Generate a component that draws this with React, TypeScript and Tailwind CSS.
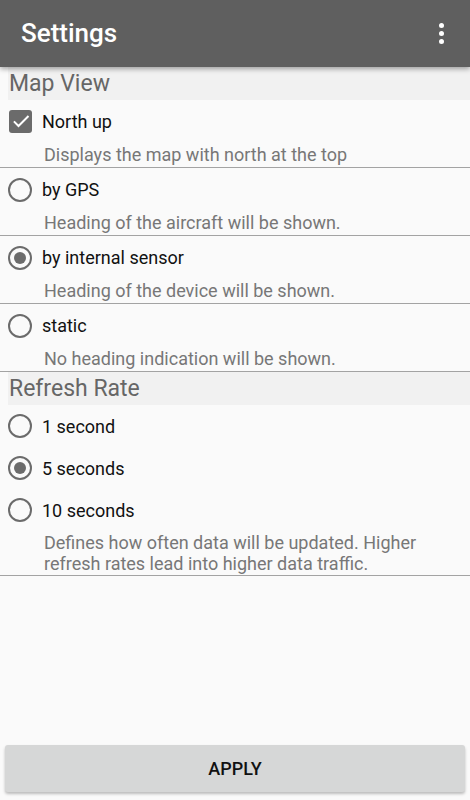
import { useState } from 'react'

type Option = { id: string; label: string; hint?: string }

const headingOptions: Option[] = [
  { id: 'gps', label: 'by GPS', hint: 'Heading of the aircraft will be shown.' },
  { id: 'sensor', label: 'by internal sensor', hint: 'Heading of the device will be shown.' },
  { id: 'static', label: 'static', hint: 'No heading indication will be shown.' },
]

const rates = [
  { id: '1', label: '1 second' },
  { id: '5', label: '5 seconds' },
  { id: '10', label: '10 seconds' },
]

function Radio({ checked }: { checked: boolean }) {
  return (
    <span className="flex h-[24px] w-[24px] shrink-0 items-center justify-center rounded-full border-[2.5px] border-[#6b6b6b]">
      {checked && <span className="h-[12px] w-[12px] rounded-full bg-[#6b6b6b]" />}
    </span>
  )
}

function SectionTitle({ children }: { children: React.ReactNode }) {
  return (
    <div className="ml-[8px] flex h-[33px] items-center bg-[#f1f1f1] pl-[1px] text-[23px] leading-none text-[#666666]">
      {children}
    </div>
  )
}

export default function App() {
  const [northUp, setNorthUp] = useState(true)
  const [heading, setHeading] = useState('sensor')
  const [rate, setRate] = useState('5')

  return (
    <div className="flex h-[800px] w-[470px] flex-col bg-[#fafafa] font-['Roboto',sans-serif]">
      <header className="relative z-10 flex h-[67px] shrink-0 items-center justify-between bg-[#5f5f5f] pl-[21px] pr-[22px] shadow-[0_2px_5px_rgba(0,0,0,0.35)]">
        <h1 className="text-[26px] font-medium text-white">Settings</h1>
        <button className="flex flex-col gap-[3px] p-1" aria-label="More options">
          <span className="h-[5px] w-[5px] rounded-full bg-white" />
          <span className="h-[5px] w-[5px] rounded-full bg-white" />
          <span className="h-[5px] w-[5px] rounded-full bg-white" />
        </button>
      </header>

      <main className="flex-1">
        <SectionTitle>Map View</SectionTitle>

        <div className="border-b border-[#a3a3a3]">
          <button
            onClick={() => setNorthUp(!northUp)}
            className="flex h-[42px] w-full items-center gap-[10px] pl-[9px] text-left text-[18px] text-[#111]"
          >
            <span className="flex h-[23px] w-[23px] items-center justify-center rounded-[3px] bg-[#6b6b6b]">
              {northUp && (
                <svg width="20" height="20" viewBox="0 0 24 24" fill="none" stroke="white" strokeWidth="2.4">
                  <path d="M3.5 12.5l5.5 5.5L21 6" />
                </svg>
              )}
            </span>
            North up
          </button>
          <div className="h-[25px] pl-[44px] text-[18px] leading-[26px] text-[#777]">
            Displays the map with north at the top
          </div>
        </div>

        {headingOptions.map((o) => (
          <div key={o.id} className="border-b border-[#a3a3a3]">
            <button
              onClick={() => setHeading(o.id)}
              className="flex h-[43px] w-full items-center gap-[10px] pl-[8px] text-left text-[18px] text-[#111]"
            >
              <Radio checked={heading === o.id} />
              {o.label}
            </button>
            <div className="h-[24px] pl-[44px] text-[18px] leading-[24px] text-[#777]">{o.hint}</div>
          </div>
        ))}

        <SectionTitle>Refresh Rate</SectionTitle>

        <div className="border-b border-[#a3a3a3]">
          {rates.map((r) => (
            <button
              key={r.id}
              onClick={() => setRate(r.id)}
              className="flex h-[42px] w-full items-center gap-[10px] pl-[8px] text-left text-[18px] text-[#111]"
            >
              <Radio checked={rate === r.id} />
              {r.label}
            </button>
          ))}
          <div className="pb-[1px] pl-[44px] pr-4 pt-[1px] text-[18px] leading-[21px] text-[#777]">
            Defines how often data will be updated. Higher refresh rates lead into higher data traffic.
          </div>
        </div>
      </main>

      <div className="px-[5px] pb-[8px]">
        <button className="h-[47px] w-full rounded-[3px] bg-[#d6d7d7] text-[18px] font-medium text-[#111] shadow-[0_2px_3px_rgba(0,0,0,0.25)]">
          APPLY
        </button>
      </div>
    </div>
  )
}
